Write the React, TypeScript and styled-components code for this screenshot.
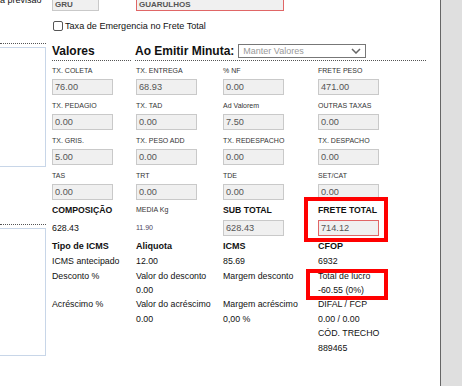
import React from 'react';
import styled, { createGlobalStyle } from 'styled-components';

const GlobalStyle = createGlobalStyle`
  html, body {
    margin: 0;
    padding: 0;
    overflow: hidden;
    background: #fff;
  }

  body {
    font-family: "Liberation Sans", Arial, sans-serif;
    color: #111;
  }
`;

const COLS = '84px 87px 95px 108px';

const Page = styled.div`
  display: flex;
  width: 462px;
  height: 386px;
  overflow: hidden;
`;

const SidePanel = styled.div`
  width: 46px;
  flex-shrink: 0;
  display: flex;
  flex-direction: column;
`;

const SideCaption = styled.div`
  margin-top: -5px;
  height: 10px;
  font-size: 9px;
  line-height: 10px;
  white-space: nowrap;
`;

const SideRule = styled.div<{ $gap: number }>`
  margin-top: ${p => p.$gap}px;
  border-top: 1px dotted #555;
`;

const SideBox = styled.div<{ $height: number }>`
  margin-top: 3px;
  height: ${p => p.$height}px;
  box-sizing: border-box;
  border: 1px solid #c8d6e8;
  border-left: none;
`;

const Main = styled.div`
  width: 394px;
  flex-shrink: 0;
  box-sizing: border-box;
  padding: 0 14px 0 6px;
  display: flex;
  flex-direction: column;
`;

const Divider = styled.div`
  width: 1px;
  background: #666;
`;

const Gutter = styled.div`
  flex: 1;
  background: #dfdfdf;
`;

const Columns = styled.div<{ $top?: number }>`
  display: grid;
  grid-template-columns: ${COLS};
  margin-top: ${p => p.$top ?? 0}px;
`;

const ReadInput = styled.div<{ $alert?: boolean; $strong?: boolean; $width?: number }>`
  box-sizing: border-box;
  width: ${p => p.$width ?? 61}px;
  height: ${p => (p.$strong ? 12 : 16)}px;
  padding: 0 2px;
  border: 1px solid ${p => (p.$alert ? '#e06666' : '#c9c9c9')};
  border-top-color: ${p => (p.$strong ? 'transparent' : undefined)};
  background: #f0f0f0;
  color: #555;
  font-size: ${p => (p.$strong ? 8 : 9.2)}px;
  font-weight: ${p => (p.$strong ? 700 : 400)};
  line-height: ${p => (p.$strong ? 10 : 14)}px;
  white-space: nowrap;
  overflow: hidden;
`;

const TopRow = styled(Columns)`
  height: 12px;
`;

const WideSlot = styled.div`
  grid-column: 2 / 4;
`;

const CheckRow = styled.label`
  margin-top: 8px;
  height: 14px;
  padding-left: 1px;
  display: flex;
  align-items: center;
  gap: 2px;
`;

const CheckBox = styled.span`
  box-sizing: border-box;
  width: 10px;
  height: 10px;
  border: 1px solid #555;
  border-radius: 2px;
  background: #fff;
`;

const CheckLabel = styled.span`
  font-size: 9.1px;
  color: #111;
`;

const SectionTitle = styled.div<{ $wide?: boolean }>`
  box-sizing: border-box;
  height: 20px;
  display: flex;
  align-items: center;
  gap: 4px;
  border-bottom: 1px dotted #555;
  font-size: 12px;
  font-weight: 700;
  white-space: nowrap;
  grid-column: ${p => (p.$wide ? '2 / 5' : 'auto')};
  margin: ${p => (p.$wide ? '0 0 0 -1px' : '0 5px 0 0')};
`;

const Select = styled.div`
  box-sizing: border-box;
  width: 128px;
  height: 14px;
  padding: 0 4px 0 4px;
  display: flex;
  align-items: center;
  justify-content: space-between;
  border: 1px solid #777;
  background: #fff;
  color: #999;
  font-size: 9px;
  font-weight: 400;
`;

const FieldGrid = styled(Columns)`
  row-gap: 3.3px;
`;

const Field = styled.div`
  display: flex;
  flex-direction: column;
`;

const FieldLabel = styled.div`
  height: 16px;
  line-height: 16px;
  font-size: 7px;
  color: #333;
  white-space: nowrap;
`;

const TotalCell = styled.div`
  display: flex;
  flex-direction: column;
  gap: 4px;
`;

const TotalTitle = styled.div<{ $small?: boolean }>`
  height: 12px;
  line-height: 12px;
  font-size: ${p => (p.$small ? 7 : 8.7)}px;
  font-weight: ${p => (p.$small ? 400 : 700)};
  color: ${p => (p.$small ? '#333' : '#111')};
  white-space: nowrap;
`;

const TotalText = styled.div<{ $small?: boolean }>`
  height: 16px;
  line-height: 16px;
  font-size: ${p => (p.$small ? 7 : 8.8)}px;
  color: ${p => (p.$small ? '#4b4560' : '#111')};
`;

const Highlight = styled.div<{ $top: number; $left: number; $w: number; $h: number }>`
  position: relative;
  display: flex;
  flex-direction: column;
  gap: inherit;

  &::after {
    content: '';
    position: absolute;
    top: ${p => p.$top}px;
    left: ${p => p.$left}px;
    width: ${p => p.$w}px;
    height: ${p => p.$h}px;
    box-sizing: border-box;
    border: 4px solid #f00;
    pointer-events: none;
  }
`;

const SummaryCol = styled.div`
  display: flex;
  flex-direction: column;
`;

const SummaryHead = styled.div`
  height: 16px;
  line-height: 16px;
  margin-bottom: 0.5px;
  font-size: 9px;
  font-weight: 700;
  white-space: nowrap;
`;

const SummaryLine = styled.div`
  height: 14.4px;
  line-height: 14.4px;
  font-size: 8.8px;
  color: #111;
  white-space: nowrap;
`;

const fields = [
  ['TX. COLETA', '76.00'],
  ['TX. ENTREGA', '68.93'],
  ['% NF', '0.00'],
  ['FRETE PESO', '471.00'],
  ['TX. PEDAGIO', '0.00'],
  ['TX. TAD', '0.00'],
  ['Ad Valorem', '7.50'],
  ['OUTRAS TAXAS', '0.00'],
  ['TX. GRIS.', '5.00'],
  ['TX. PESO ADD', '0.00'],
  ['TX. REDESPACHO', '0.00'],
  ['TX. DESPACHO', '0.00'],
  ['TAS', '0.00'],
  ['TRT', '0.00'],
  ['TDE', '0.00'],
  ['SET/CAT', '0.00'],
];

const summary = [
  { head: 'Tipo de ICMS', lines: ['ICMS antecipado', 'Desconto %', '', 'Acréscimo %'] },
  { head: 'Aliquota', lines: ['12.00', 'Valor do desconto', '0.00', 'Valor do acréscimo', '0.00'] },
  { head: 'ICMS', lines: ['85.69', 'Margem desconto', '', 'Margem acréscimo', '0,00 %'] },
];

const App: React.FC = () => {
  return (
    <>
      <GlobalStyle />
      <Page>
        <SidePanel>
          <SideCaption>a previsão</SideCaption>
          <SideRule $gap={37.5} />
          <SideBox $height={120} />
          <SideRule $gap={57.5} />
          <SideBox $height={128} />
        </SidePanel>

        <Main>
          <TopRow $top={-1}>
            <ReadInput $strong $width={47}>GRU</ReadInput>
            <WideSlot>
              <ReadInput $strong $alert $width={148}>GUARULHOS</ReadInput>
            </WideSlot>
          </TopRow>

          <CheckRow>
            <CheckBox />
            <CheckLabel>Taxa de Emergencia no Frete Total</CheckLabel>
          </CheckRow>

          <Columns $top={8}>
            <SectionTitle>Valores</SectionTitle>
            <SectionTitle $wide>
              Ao Emitir Minuta:
              <Select>
                Manter Valores
                <svg width="10" height="6" viewBox="0 0 10 6">
                  <polyline points="1,1 5,5 9,1" fill="none" stroke="#666" strokeWidth="1.5" />
                </svg>
              </Select>
            </SectionTitle>
          </Columns>

          <FieldGrid $top={1.5}>
            {fields.map(([label, value]) => (
              <Field key={label}>
                <FieldLabel>{label}</FieldLabel>
                <ReadInput>{value}</ReadInput>
              </Field>
            ))}
          </FieldGrid>

          <Columns $top={3.6}>
            <TotalCell>
              <TotalTitle>COMPOSIÇÃO</TotalTitle>
              <TotalText>628.43</TotalText>
            </TotalCell>
            <TotalCell>
              <TotalTitle $small>MEDIA Kg</TotalTitle>
              <TotalText $small>11.90</TotalText>
            </TotalCell>
            <TotalCell>
              <TotalTitle>SUB TOTAL</TotalTitle>
              <ReadInput>628.43</ReadInput>
            </TotalCell>
            <TotalCell>
              <Highlight $top={-7} $left={-14} $w={84} $h={45}>
                <TotalTitle>FRETE TOTAL</TotalTitle>
                <ReadInput $alert>714.12</ReadInput>
              </Highlight>
            </TotalCell>
          </Columns>

          <Columns $top={1.8}>
            {summary.map(col => (
              <SummaryCol key={col.head}>
                <SummaryHead>{col.head}</SummaryHead>
                {col.lines.map((line, i) => (
                  <SummaryLine key={i}>{line}</SummaryLine>
                ))}
              </SummaryCol>
            ))}
            <SummaryCol>
              <SummaryHead>CFOP</SummaryHead>
              <SummaryLine>6932</SummaryLine>
              <Highlight $top={0} $left={-12} $w={82} $h={31}>
                <SummaryLine>Total de lucro</SummaryLine>
                <SummaryLine>-60.55 (0%)</SummaryLine>
              </Highlight>
              <SummaryLine>DIFAL / FCP</SummaryLine>
              <SummaryLine>0.00 / 0.00</SummaryLine>
              <SummaryLine>CÓD. TRECHO</SummaryLine>
              <SummaryLine>889465</SummaryLine>
            </SummaryCol>
          </Columns>
        </Main>

        <Divider />
        <Gutter />
      </Page>
    </>
  );
};

export default App;
